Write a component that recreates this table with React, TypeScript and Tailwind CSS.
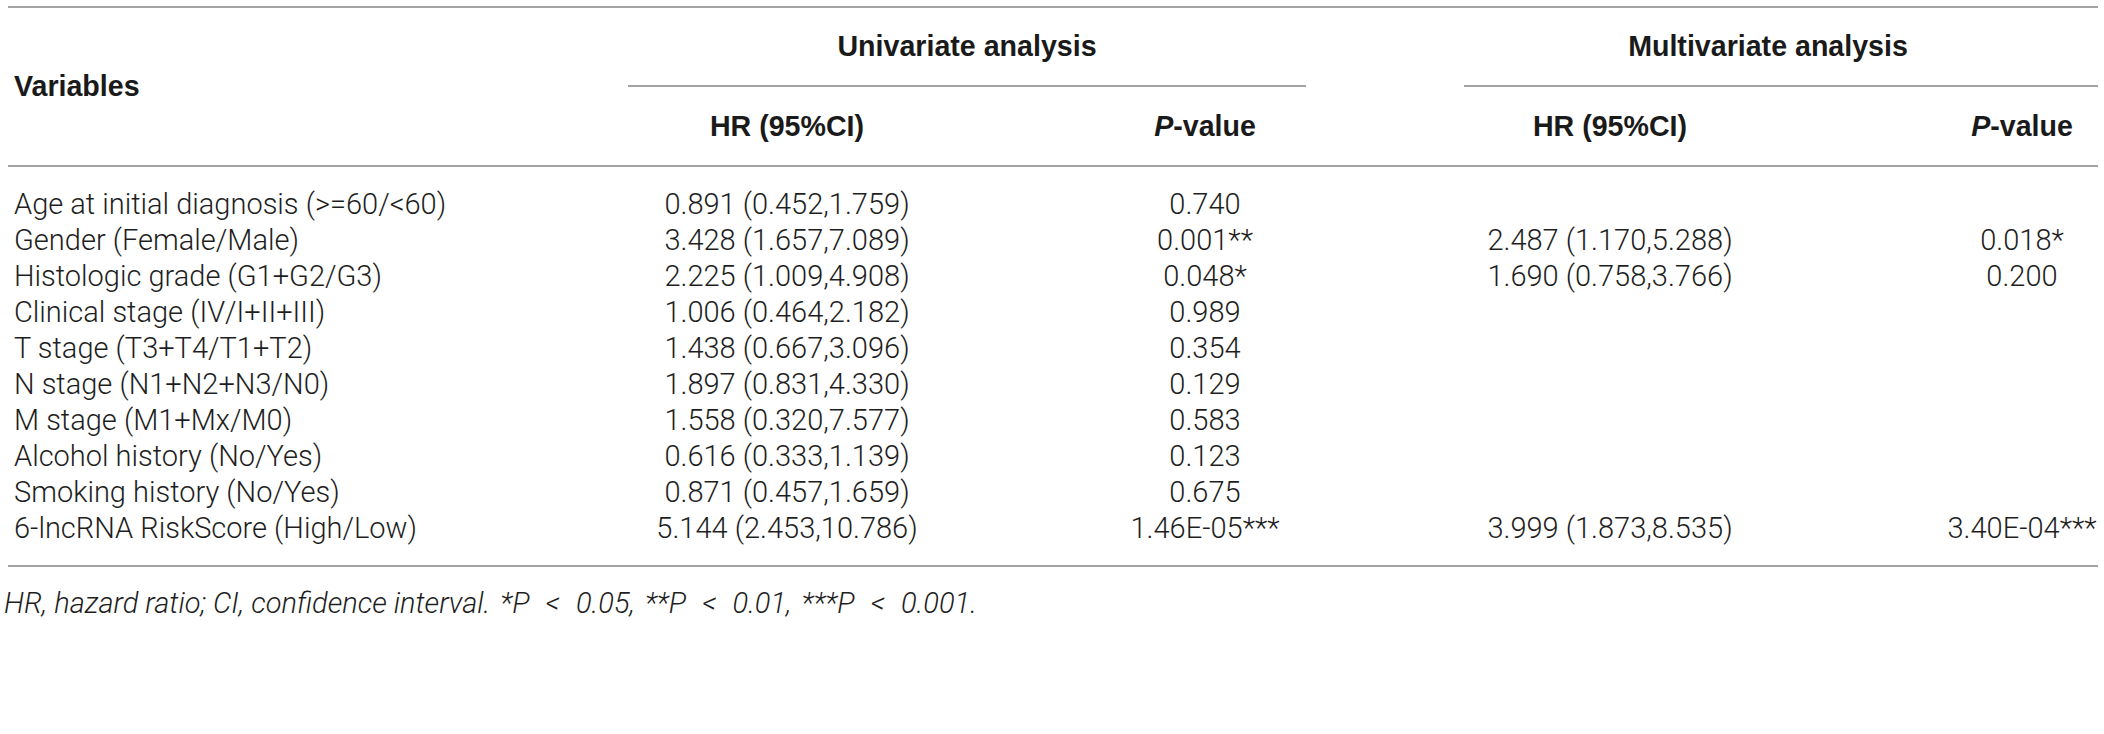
import React from "react";

const rows: string[][] = [
  ["Age at initial diagnosis (>=60/<60)", "0.891 (0.452,1.759)", "0.740", "", ""],
  ["Gender (Female/Male)", "3.428 (1.657,7.089)", "0.001**", "2.487 (1.170,5.288)", "0.018*"],
  ["Histologic grade (G1+G2/G3)", "2.225 (1.009,4.908)", "0.048*", "1.690 (0.758,3.766)", "0.200"],
  ["Clinical stage (IV/I+II+III)", "1.006 (0.464,2.182)", "0.989", "", ""],
  ["T stage (T3+T4/T1+T2)", "1.438 (0.667,3.096)", "0.354", "", ""],
  ["N stage (N1+N2+N3/N0)", "1.897 (0.831,4.330)", "0.129", "", ""],
  ["M stage (M1+Mx/M0)", "1.558 (0.320,7.577)", "0.583", "", ""],
  ["Alcohol history (No/Yes)", "0.616 (0.333,1.139)", "0.123", "", ""],
  ["Smoking history (No/Yes)", "0.871 (0.457,1.659)", "0.675", "", ""],
  ["6-lncRNA RiskScore (High/Low)", "5.144 (2.453,10.786)", "1.46E-05***", "3.999 (1.873,8.535)", "3.40E-04***"],
];

function PValueHead() {
  return (
    <span className="font-bold">
      <span className="italic">P</span>-value
    </span>
  );
}

function Lt() {
  return <span className="mx-[16px]">&lt;</span>;
}

export default function App() {
  return (
    <div className="w-[2104px] h-[734px] bg-white font-['Roboto',sans-serif] font-light text-[29px] text-[#1e1e1e] leading-none pt-[6px]">
      <div className="mx-[8px] w-[2090px]">
        <div className="grid grid-cols-[620px_318px_518px_482px_152px] grid-rows-[77px_2px_78px] border-t-2 border-b-2 border-[#a3a3a3] font-['Liberation_Sans',Arial,sans-serif] text-[28.6px] text-[#1a1a1a]">
          <div className="row-span-3 col-start-1 row-start-1 flex items-center pl-[6px] font-bold">
            Variables
          </div>
          <div className="col-start-2 col-span-2 row-start-1 flex items-center justify-center mr-[158px] font-bold">
            Univariate analysis
          </div>
          <div className="col-start-2 col-span-2 row-start-2 mr-[158px] bg-[#a3a3a3]" />
          <div className="col-start-4 col-span-2 row-start-1 flex items-center justify-center pr-[26px] font-bold">
            Multivariate analysis
          </div>
          <div className="col-start-4 col-span-2 row-start-2 bg-[#a3a3a3]" />
          <div className="col-start-2 row-start-3 flex items-center justify-center font-bold">
            HR (95%CI)
          </div>
          <div className="col-start-3 row-start-3 flex items-center justify-center">
            <PValueHead />
          </div>
          <div className="col-start-4 row-start-3 flex items-center justify-center pr-[190px] font-bold">
            HR (95%CI)
          </div>
          <div className="col-start-5 row-start-3 flex items-center justify-center">
            <PValueHead />
          </div>
        </div>
        <div className="pt-[19px] pb-[19px] border-b-2 border-[#a3a3a3]">
          {rows.map((r, i) => (
            <div key={i} className="grid grid-cols-[620px_318px_518px_482px_152px] h-[36px] items-center">
              <div className="pl-[6px] whitespace-nowrap">{r[0]}</div>
              <div className="text-center whitespace-nowrap">{r[1]}</div>
              <div className="text-center whitespace-nowrap">{r[2]}</div>
              <div className="text-center whitespace-nowrap pr-[190px]">{r[3]}</div>
              <div className="text-center whitespace-nowrap">{r[4]}</div>
            </div>
          ))}
        </div>
      </div>
      <div className="mt-[18px] h-[36px] flex items-center pl-[4px] italic whitespace-nowrap">
        <span>HR, hazard ratio; CI, confidence interval.</span>
        <span className="ml-[10px]">*P<Lt />0.05,</span>
        <span className="ml-[10px]">**P<Lt />0.01,</span>
        <span className="ml-[10px]">***P<Lt />0.001.</span>
      </div>
    </div>
  );
}
